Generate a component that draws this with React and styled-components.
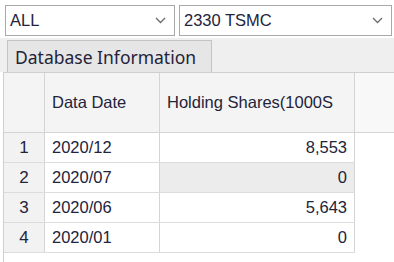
import React from "react";
import styled, { createGlobalStyle } from "styled-components";

const rows = [
    { n: 1, date: "2020/12", shares: "8,553" },
    { n: 2, date: "2020/07", shares: "0", shaded: true },
    { n: 3, date: "2020/06", shares: "5,643" },
    { n: 4, date: "2020/01", shares: "0" },
];

const Chevron = () => (
    <svg width="11" height="7" viewBox="0 0 11 7">
        <path d="M1 1 L5.5 5.5 L10 1" fill="none" stroke="#6a6a6a" strokeWidth="1.3" />
    </svg>
);

const App = () => {
    return (
        <>
            <GlobalStyle />
            <Page>
                <TopBar>
                    <Select $w={170}>
                        <span>ALL</span>
                        <Chevron />
                    </Select>
                    <Select $w={213}>
                        <span>2330 TSMC</span>
                        <Chevron />
                    </Select>
                </TopBar>
                <TabStrip>
                    <Tab>Database Information</Tab>
                </TabStrip>
                <Grid>
                    <HeadRow>
                        <Corner />
                        <HeadCell $w={115}>Data Date</HeadCell>
                        <HeadCell $w={195}>Holding Shares(1000S</HeadCell>
                        <Filler $head />
                    </HeadRow>
                    {rows.map((r) => (
                        <Row key={r.n}>
                            <RowNum>{r.n}</RowNum>
                            <Cell $w={115}>{r.date}</Cell>
                            <Cell $w={195} $right $shaded={r.shaded}>
                                {r.shares}
                            </Cell>
                        </Row>
                    ))}
                </Grid>
            </Page>
        </>
    );
};

export default App;

const GlobalStyle = createGlobalStyle`
    body {
        margin: 0;
        background: #fff;
    }
`;

const Page = styled.div`
    width: 394px;
    height: 262px;
    overflow: hidden;
    background: #fff;
    font-family: "Liberation Sans", Arial, sans-serif;
    color: #23233a;
    display: flex;
    flex-direction: column;
`;

const TopBar = styled.div`
    display: flex;
    gap: 4px;
    padding: 5px 0 0 5px;
    height: 31px;
`;

const Select = styled.div`
    box-sizing: border-box;
    width: ${(p) => p.$w}px;
    height: 31px;
    border: 1px solid #a9a9a9;
    background: #fff;
    display: flex;
    align-items: center;
    justify-content: space-between;
    padding: 0 8px 0 4px;
    font-size: 16.5px;
`;

const TabStrip = styled.div`
    margin-top: 2px;
    height: 34px;
    background: #efefef;
    display: flex;
    align-items: flex-end;
    padding-left: 7px;
`;

const Tab = styled.div`
    box-sizing: border-box;
    width: 205px;
    height: 32px;
    border: 1px solid #c4c4c4;
    border-bottom: none;
    background: #e6e6e6;
    font-family: "Noto Sans", "Open Sans", sans-serif;
    font-size: 17.5px;
    display: flex;
    align-items: center;
    padding-left: 7px;
    white-space: nowrap;
`;

const Grid = styled.div`
    flex: 1;
    margin-left: 3px;
    border-left: 1px solid #cfcfcf;
    border-top: 1px solid #cfcfcf;
    display: flex;
    flex-direction: column;
    font-size: 16.5px;
`;

const HeadRow = styled.div`
    display: flex;
    height: 59px;
    border-bottom: 1px solid #d4d4d4;
`;

const Row = styled.div`
    display: flex;
    height: 29px;
    border-bottom: 1px solid #dcdcdc;
    width: 351px;
`;

const Corner = styled.div`
    width: 40px;
    background: #f4f4f4;
    border-right: 1px solid #d4d4d4;
`;

const HeadCell = styled.div`
    box-sizing: border-box;
    width: ${(p) => p.$w}px;
    background: #f4f4f4;
    border-right: 1px solid #d4d4d4;
    display: flex;
    align-items: center;
    padding-left: 7px;
    white-space: nowrap;
`;

const Filler = styled.div`
    flex: 1;
    background: ${(p) => (p.$head ? "#f8f8f8" : "#fff")};
`;

const RowNum = styled.div`
    width: 40px;
    background: #f2f2f2;
    border-right: 1px solid #d4d4d4;
    display: flex;
    align-items: center;
    justify-content: center;
    font-size: 17px;
`;

const Cell = styled.div`
    box-sizing: border-box;
    width: ${(p) => p.$w}px;
    background: ${(p) => (p.$shaded ? "#ececec" : "#fff")};
    border-right: 1px solid #d4d4d4;
    display: flex;
    align-items: center;
    justify-content: ${(p) => (p.$right ? "flex-end" : "flex-start")};
    padding: 0 7px;
`;
